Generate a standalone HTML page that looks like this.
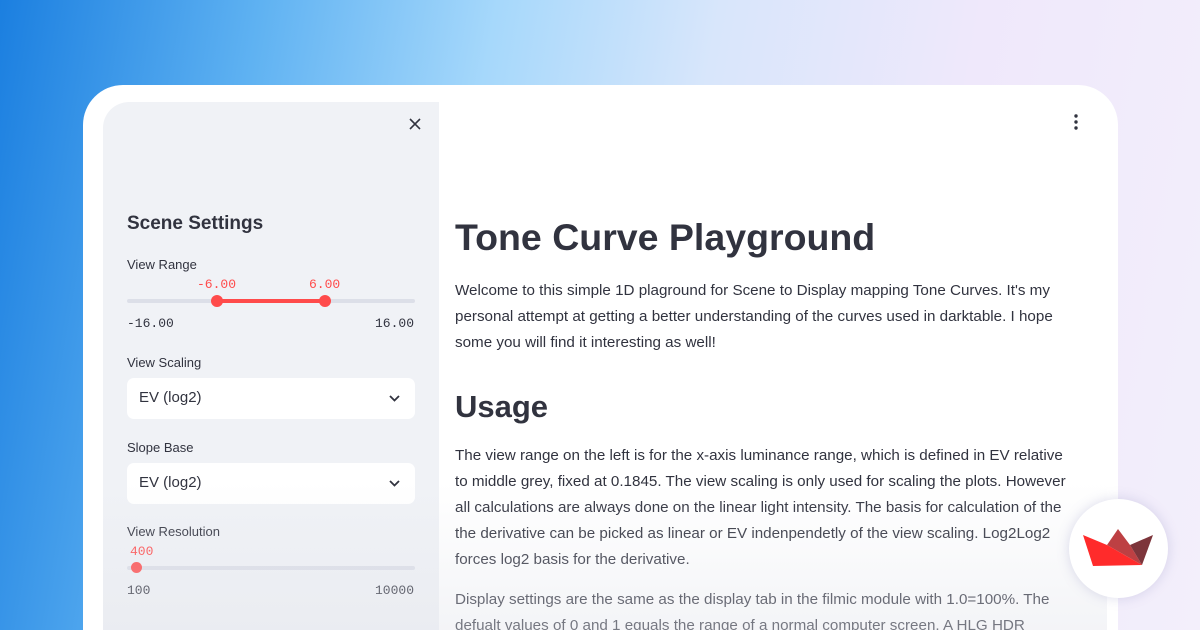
<!DOCTYPE html>
<html><head><meta charset="utf-8"><style>
*{margin:0;padding:0;box-sizing:border-box}
html,body{width:1200px;height:630px;overflow:hidden}
body{position:relative;font-family:"Liberation Sans","DejaVu Sans",sans-serif;
background:linear-gradient(100deg,#1b7fe0 0%,#5fb2f2 20%,#a6d8fb 38%,#d8e6fb 55%,#efe8fb 75%,#f3effb 100%);}
.card{position:absolute;left:83px;top:85px;width:1035px;height:545px;background:#fff;border-radius:40px 40px 0 0;}
.inner{position:absolute;left:103px;top:102px;width:1004px;height:528px;border-radius:26px 0 0 0;overflow:hidden;background:#fff}
.side{position:absolute;left:0;top:0;width:336px;height:528px;background:#f0f2f6}
.fade{position:absolute;left:0;top:0;width:1004px;height:528px;background:linear-gradient(180deg,rgba(255,255,255,0) 72%,rgba(226,228,235,.4) 100%)}
.t{position:absolute;color:#31333f;white-space:nowrap}
.mono{font-family:"Liberation Mono",monospace;font-size:13px}
.sel{position:absolute;left:24px;width:288px;height:41px;background:#fff;border-radius:7px;font-size:15px;color:#31333f;padding:11px 12px}
.main p{font-size:15.2px;line-height:26px;color:#31333f;width:615px}
</style></head><body>
<div class="card"></div>
<div class="inner">
<div class="side">
<svg style="position:absolute;left:306px;top:16px" width="12" height="12"><path d="M1 1L11 11M11 1L1 11" stroke="#31333f" stroke-width="1.6"/></svg>
<div class="t" style="left:24px;top:111px;font-size:19px;font-weight:bold">Scene Settings</div>
<div class="t" style="left:24px;top:155px;font-size:13px">View Range</div>
<div class="t mono" style="left:94px;top:175px;color:#ff4b4b">-6.00</div>
<div class="t mono" style="left:206px;top:175px;color:#ff4b4b">6.00</div>
<div style="position:absolute;left:24px;top:197px;width:288px;height:4px;background:#dcdfe8;border-radius:2px"></div>
<div style="position:absolute;left:114px;top:197px;width:108px;height:4px;background:#ff4b4b"></div>
<div style="position:absolute;left:108px;top:193px;width:12px;height:12px;border-radius:50%;background:#ff4b4b"></div>
<div style="position:absolute;left:216px;top:193px;width:12px;height:12px;border-radius:50%;background:#ff4b4b"></div>
<div class="t mono" style="left:24px;top:214px">-16.00</div>
<div class="t mono" style="left:272px;top:214px">16.00</div>
<div class="t" style="left:24px;top:253px;font-size:13px">View Scaling</div>
<div class="sel" style="top:276px">EV (log2)<svg style="position:absolute;right:15px;top:17px" width="11" height="7"><path d="M1 1L5.5 5.5L10 1" fill="none" stroke="#31333f" stroke-width="1.8"/></svg></div>
<div class="t" style="left:24px;top:338px;font-size:13px">Slope Base</div>
<div class="sel" style="top:361px">EV (log2)<svg style="position:absolute;right:15px;top:17px" width="11" height="7"><path d="M1 1L5.5 5.5L10 1" fill="none" stroke="#31333f" stroke-width="1.8"/></svg></div>
<div class="t" style="left:24px;top:422px;font-size:13px">View Resolution</div>
<div class="t mono" style="left:27px;top:442px;color:#ff4b4b">400</div>
<div style="position:absolute;left:24px;top:464px;width:288px;height:4px;background:#dcdfe8;border-radius:2px"></div>
<div style="position:absolute;left:28px;top:460px;width:11px;height:11px;border-radius:50%;background:#ff4b4b"></div>
<div class="t mono" style="left:24px;top:481px">100</div>
<div class="t mono" style="left:272px;top:481px">10000</div>
</div>
<div class="main">
<svg style="position:absolute;left:971px;top:12px" width="4" height="16"><circle cx="2" cy="2" r="1.7" fill="#31333f"/><circle cx="2" cy="8" r="1.7" fill="#31333f"/><circle cx="2" cy="14" r="1.7" fill="#31333f"/></svg>
<div class="t" style="left:352px;top:114px;font-size:37.5px;font-weight:bold">Tone Curve Playground</div>
<p class="t" style="left:352px;top:176px;white-space:normal">Welcome to this simple 1D plaground for Scene to Display mapping Tone Curves. It's my personal attempt at getting a better understanding of the curves used in darktable. I hope some you will find it interesting as well!</p>
<div class="t" style="left:352px;top:287px;font-size:31px;font-weight:bold">Usage</div>
<p class="t" style="left:352px;top:341px;white-space:normal">The view range on the left is for the x-axis luminance range, which is defined in EV relative to middle grey, fixed at 0.1845. The view scaling is only used for scaling the plots. However all calculations are always done on the linear light intensity. The basis for calculation of the the derivative can be picked as linear or EV indenpendetly of the view scaling. Log2Log2 forces log2 basis for the derivative.</p>
<p class="t" style="left:352px;top:485px;white-space:normal">Display settings are the same as the display tab in the filmic module with 1.0=100%. The defualt values of 0 and 1 equals the range of a normal computer screen. A HLG HDR screen</p>
</div>
<div class="fade"></div>
</div>
<div style="position:absolute;left:1069px;top:499px;width:99px;height:99px;border-radius:50%;background:#fff;box-shadow:0 0 12px rgba(120,120,180,.25)"></div>
<svg style="position:absolute;left:0;top:0" width="1200" height="630">
<polygon points="1107,545 1118,529 1130,545 1142,565" fill="#bd4043"/>
<polygon points="1130,545 1153,535 1142,565" fill="#7d353b"/>
<polygon points="1083,535 1107,545 1142,565 1093,566" fill="#ff2b2b"/>
</svg>
</body></html>
